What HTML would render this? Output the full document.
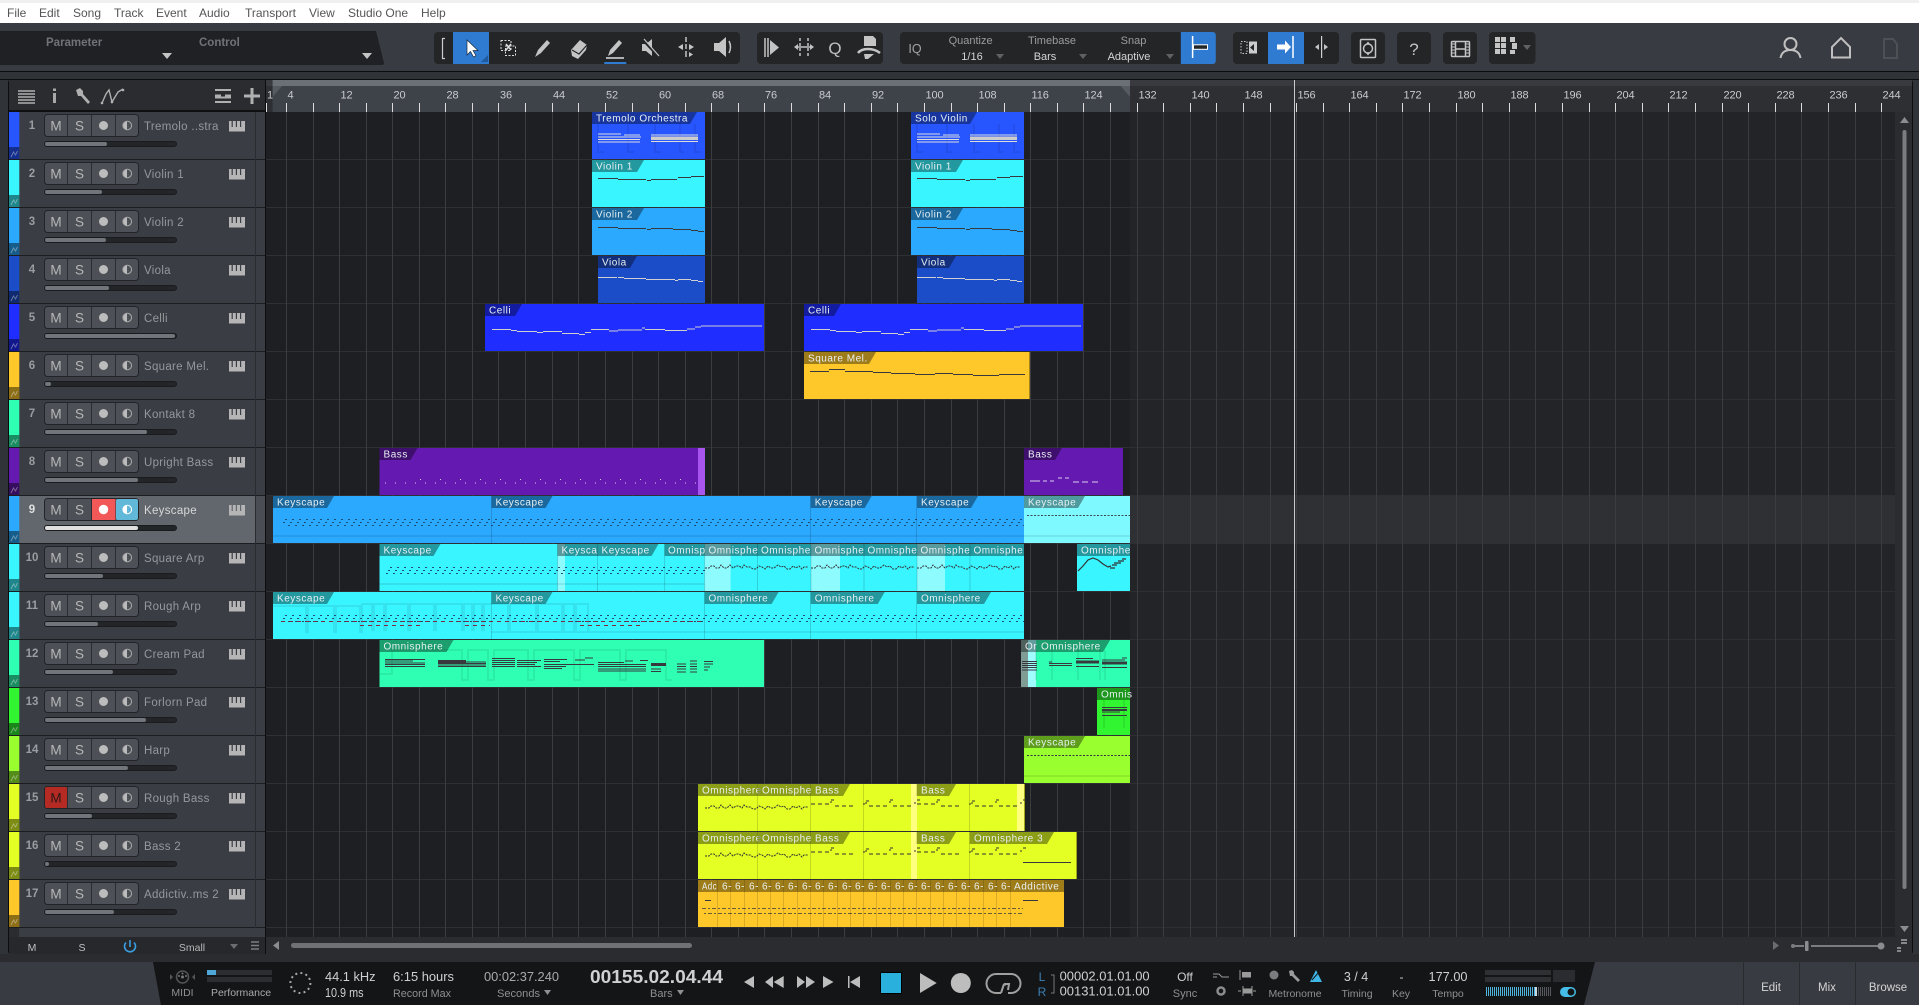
<!DOCTYPE html>
<html><head><meta charset="utf-8"><title>Studio One</title>
<style>
html,body{margin:0;padding:0;background:#303338;width:1919px;height:1005px;overflow:hidden}
svg{display:block;font-family:"Liberation Sans",sans-serif}
.m{font-size:12px;fill:#555}
.rl{font-size:11px;fill:#c9cbce;letter-spacing:-.1px}
.n{font-size:11.5px;font-weight:bold;fill:#9a9da1;text-anchor:middle}
.t{font-size:11.5px;fill:#95989c;letter-spacing:.3px}
.l{font-size:10px;fill:#e8f0f2;letter-spacing:.53px}
.f{fill:#000;fill-opacity:.38}
.g{font-size:11px;fill:#9a9c9f;text-anchor:middle}
.v{font-size:11px;fill:#d4d4d4;text-anchor:middle}
.w{font-size:12.5px;fill:#cfd0d2}
.s{font-size:11px;fill:#8d9094}
.d{fill:none;stroke:#38383f}
.i{fill:none;stroke:#c4c4c4;stroke-width:1.5}
.o{fill:#c4c4c4}
.a{fill:none;stroke:#000;stroke-opacity:.07;stroke-width:2}
</style></head><body>
<svg width="1919" height="1005" viewBox="0 0 1919 1005" xmlns="http://www.w3.org/2000/svg">
<defs>
<pattern id="a" width="7" height="48" patternUnits="userSpaceOnUse"><path d="M5 39h2v1H5zM3 42h2v1H3zM1 45h2v1H1z" fill="#1c4f78"/></pattern>
<pattern id="st" width="2" height="10" patternUnits="userSpaceOnUse"><rect width="1" height="10" fill="#4fb4dc"/></pattern>
<pattern id="sg" width="2" height="10" patternUnits="userSpaceOnUse"><rect width="1" height="10" fill="#55585c"/></pattern>
<g id="r"><rect x="19" width="236" height="47" fill="#3a3d43"/><rect x="256" width="9" height="47" fill="#3a3d43"/></g>
<g id="c">
<rect x="44.5" y="2.5" width="94" height="22" rx="3" fill="#4d5056" stroke="#222427"/>
<path d="M67.5 3v21M91.5 3v21M115.5 3v21" stroke="#2b2d31"/>
<text x="56" y="18.5" font-size="13.5" fill="#b8b8b8" text-anchor="middle">M</text>
<text x="79.5" y="18.5" font-size="13.5" fill="#b8b8b8" text-anchor="middle">S</text>
<circle cx="103.5" cy="13.5" r="4.5" fill="#bcbcbc"/>
<path d="M127 9a4.500 4.500 0 0 0 0 9z" fill="#bcbcbc"/><circle cx="127.3" cy="13.5" r="4.3" fill="none" stroke="#a9a9a9"/>
<rect x="44.5" y="29.5" width="132" height="5" rx="2.5" fill="#232528" stroke="#1a1b1d"/>
<path d="M229 9h2.600v6h1.200V9h3v6h1.200V9h3v6h1.200V9h3.800v10.500H229z" fill="#b5b5b5"/>
</g>
<g id="sw"><rect x="9" y="35" width="10.300" height="12" fill="#000" fill-opacity=".45"/><path d="M11 45l2.500-5 2 3 2-4" fill="none" stroke="#fff" stroke-opacity=".35"/></g>
<g id="w1"><path d="M0 4h4l2-2h3l2 2h3l2-3 3 3h3l3-3 3 3 3-2h3l3 2 2-3 3 2h3l3 2h3l3-3 3 1 3 2 3-3 3 2h3l4-3 3 2 3-1 3 3h3l3-3 3 2 3-2 3 3 2-2h4" fill="none" stroke="#333" stroke-dasharray="2 1"/></g>
<g id="bs"><path d="M0 4h4m3 0h4m3 0h4M20 0h3m-4 2h2M24 6h4m3 0h4m3 0h4M54 4h-2m3-3h3m-4 2h2M58 6h4m3 0h4m3 0h4M79 0h3m-4 2h2M82 6h4m3 0h4m3 0h4M103 3h2m1-3h3" fill="none" stroke="#333"/></g>
<g id="tr"><path d="M6 24h23M32 25h16M6 27h43M6 29.500h42M6 32h42M59 25h47M59 31.500h47" stroke="#ddd" fill="none"/><path d="M59 28.200h47" stroke="#ccc" stroke-width="3.500" fill="none"/></g>
</defs>

<!-- chrome -->
<rect width="1919" height="1005" fill="#303338"/>
<rect width="1919" height="23" fill="#fff"/><rect width="1919" height="3" fill="#f0f0f0"/>
<rect y="23" width="1919" height="48" fill="#383b41"/><rect y="71" width="1919" height="1" fill="#0c0d0e"/>
<g class="m"><text class="m" x="7" y="17">File</text><text class="m" x="39" y="17">Edit</text><text class="m" x="73" y="17">Song</text><text class="m" x="114" y="17">Track</text><text class="m" x="156" y="17">Event</text><text class="m" x="199" y="17">Audio</text><text class="m" x="245" y="17">Transport</text><text class="m" x="309" y="17">View</text><text class="m" x="348" y="17">Studio One</text><text class="m" x="421" y="17">Help</text></g>

<!-- parameter panel -->
<path d="M0 31H376L384 63Q384 65 382 65H0z" fill="#1f2125"/>
<text x="46" y="46" font-size="11.500" font-weight="bold" fill="#6f7276">Parameter</text>
<text x="199" y="46" font-size="11.500" font-weight="bold" fill="#6f7276">Control</text>
<path d="M162 53h10l-5 6zM362 53h10l-5 6z" fill="#c4c4c4"/>

<!-- tool groups -->
<g fill="#232527">
<rect x="434" y="32" width="306" height="32" rx="4"/><rect x="757" y="32" width="126" height="32" rx="4"/><rect x="900" y="32" width="315.500" height="32" rx="4"/><rect x="1233" y="32" width="106" height="32" rx="4"/><rect x="1351" y="32" width="34" height="32" rx="4"/><rect x="1397" y="32" width="34" height="32" rx="4"/><rect x="1443" y="32" width="34" height="32" rx="4"/><rect x="1489" y="32" width="46.500" height="32" rx="4"/>
</g>
<path d="M445 38.500h-2.500v20h2.500" fill="none" stroke="#ccc" stroke-width="1.200"/>
<rect x="453" y="32" width="36" height="32" fill="#2f7bd1"/>
<path d="M481 62l7-7v7z" fill="#1f5a9e"/>
<path d="M467 40v15l3.500-3.500 3 5.500 2.500-1.300-3-5.200h5z" fill="#fff" stroke="#1a2a3a" stroke-width=".7"/>
<path d="M501 40.500h10v10h-10zM505.500 46h10v9.500h-10z" fill="none" stroke="#ddd" stroke-dasharray="2 1.500"/><path d="M506 44l5 6m0-6l-5 6" stroke="#ddd" stroke-width="1.500"/>
<path d="M535 57l3-7 9-10 3 3-9 10z" class="o"/>
<path d="M571 50l9-10 7 5-1 5-8 9-6-3z" class="o"/><path d="M572 50l7 4 8-9" fill="none" stroke="#232527" stroke-width="1.200"/>
<path d="M608 56l2-6 9-10 3 3-9 10z" class="o"/><path d="M606 58h18" stroke="#ddd" stroke-width="1.500"/>
<rect x="604" y="62" width="22.500" height="2" rx="1" fill="#2f7bd1"/>
<path d="M642 44h4l6-5v17l-6-5h-4z" class="o"/><path d="M642 39l17 18" stroke="#232527" stroke-width="2.500"/><path d="M644 39l15 17" stroke="#c4c4c4" stroke-width="1.200"/>
<path d="M686 37v5m0 2v5m0 2v6" stroke="#c4c4c4" stroke-width="1.500"/><path d="M678 47l5-3v6zM694 47l-5-3v6zM689 52v5l4-2.500z" class="o"/>
<path d="M714 43h5l7-6v20l-7-6h-5z" class="o"/><path d="M729 41q3 6 0 12" class="i"/>
<!-- group 2 -->
<path d="M765 38v19M768 38v19" class="i"/><path d="M770 40l9 7.500-9 7.500z" class="o"/>
<path d="M800 38v19M808 38v19" class="i" stroke-dasharray="3 2"/><path d="M796 47h16" class="i"/><path d="M794 47l4-3v6zM814 47l-4-3v6z" class="o"/>
<text x="835" y="54" font-size="17" fill="#c0c0c0" text-anchor="middle">Q</text>
<path d="M864 36h9l3 3v7h-12z" class="o"/><path d="M858 53q3-4 10-4t12 4" fill="none" stroke="#c4c4c4" stroke-width="2.500"/><path d="M864 54h10l-6 5h-3z" class="o"/>
<!-- quantize -->
<text x="915" y="53" font-size="12.500" fill="#a4a4a4" text-anchor="middle">IQ</text>
<text class="g" x="970.600" y="44">Quantize</text><text class="v" x="972" y="60">1/16</text><path d="M996 54h8l-4 5z" fill="#5f6165"/>
<text class="g" x="1052" y="44">Timebase</text><text class="v" x="1045" y="60">Bars</text><path d="M1079 54h8l-4 5z" fill="#5f6165"/>
<text class="g" x="1133.500" y="44">Snap</text><text class="v" x="1129" y="60">Adaptive</text><path d="M1166 54h8l-4 5z" fill="#5f6165"/>
<path d="M1180.800 32h32a3 3 0 0 1 3 3v26a3 3 0 0 1-3 3h-32z" fill="#2f7bd1"/>
<path d="M1192.600 36v22" stroke="#fff" stroke-width="1.500"/><rect x="1193.500" y="44.800" width="14" height="4.500" fill="#232527" stroke="#fff"/>
<!-- group 4 -->
<rect x="1241" y="41.500" width="6" height="12" fill="none" stroke="#ccc" stroke-dasharray="1.500 1.500"/><rect x="1249" y="41.500" width="8" height="12" fill="#ccc"/><path d="M1254 44l-4 3.500 4 3.500z" fill="#232527"/>
<rect x="1268" y="32" width="36" height="32" fill="#2f7bd1"/><path d="M1293 36v22" stroke="#fff" stroke-width="1.500"/><path d="M1277 44.500h8v-4l6 6.500-6 6.500v-4h-8z" fill="#fff"/>
<path d="M1321.600 36v22" stroke="#d0d0d0" stroke-width="1.200"/><path d="M1319 44v6l-4-3zM1324 44v6l4-3z" class="o"/>
<rect x="1360.500" y="39.500" width="15" height="18" rx="1" class="i"/><circle cx="1368" cy="48.500" r="4.500" class="i"/><path d="M1368 41.500l2 2.500h-4zM1368 55.500l2-2.500h-4z" class="o"/>
<text x="1414" y="55" font-size="17" fill="#c4c4c4" text-anchor="middle">?</text>
<rect x="1451.500" y="41.500" width="18" height="15" rx="1" class="i"/><path d="M1455.500 41v15M1465.500 41v15M1455 49h11" class="i"/><path d="M1452 44h3M1452 47h3M1452 50h3M1452 53h3M1466 44h3M1466 47h3M1466 50h3M1466 53h3" stroke="#c4c4c4"/>
<path d="M1495 37h5v5h-5zM1501 37h5v5h-5zM1495 43h5v5h-5zM1501 43h5v5h-5zM1495 49h5v5h-5zM1501 49h5v5h-5zM1510 37h5v5h-5zM1512 43h5v6h-5zM1510 50h5v4h-5z" class="o"/>
<path d="M1523 45h8l-4 5z" fill="#5f6165"/>
<!-- right icons -->
<circle cx="1790.500" cy="44" r="6" fill="none" stroke="#c0c0c0" stroke-width="2"/><path d="M1780.500 58q1.500-8 10-8t10 8" fill="none" stroke="#c0c0c0" stroke-width="2"/>
<path d="M1832 57.500V47l9-9 9 9v10.500z" fill="none" stroke="#c0c0c0" stroke-width="2"/>
<path d="M1884 39h9l4 5v14h-13z" fill="none" stroke="#4d5055" stroke-width="2"/>

<!-- main panel frame -->
<rect y="79" width="1919" height="1" fill="#0c0d0e"/>
<rect x="8" y="79" width="1905" height="876" rx="4" fill="#0c0d0e"/>
<rect x="9" y="80" width="1903" height="874" rx="3" fill="#2a2c30"/>

<!-- arrangement -->
<rect x="266" y="112" width="864" height="825" fill="#1e1f22"/>
<rect x="1130" y="112" width="765" height="825" fill="#232427"/>
<rect x="266" y="496" width="864" height="48" fill="#2a2b2e"/>
<rect x="1130" y="496" width="765" height="48" fill="#2f3033"/>
<path d="M266 159.500H1895M266 207.500H1895M266 255.500H1895M266 303.500H1895M266 351.500H1895M266 399.500H1895M266 447.500H1895M266 495.500H1895M266 543.500H1895M266 591.500H1895M266 639.500H1895M266 687.500H1895M266 735.500H1895M266 783.500H1895M266 831.500H1895M266 879.500H1895M266 927.500H1895" stroke="#2e2f32"/>
<path d="M286.500 112V937M313.500 112V937M339.500 112V937M366.500 112V937M392.500 112V937M419.500 112V937M445.500 112V937M472.500 112V937M498.500 112V937M525.500 112V937M552.500 112V937M578.500 112V937M605.500 112V937M632.500 112V937M658.500 112V937M685.500 112V937M711.500 112V937M738.500 112V937M764.500 112V937M791.500 112V937M818.500 112V937M844.500 112V937M871.500 112V937M897.500 112V937M924.500 112V937M951.500 112V937M977.500 112V937M1004.500 112V937M1030.500 112V937M1057.500 112V937M1083.500 112V937M1110.500 112V937M1137.500 112V937M1163.500 112V937M1190.500 112V937M1216.500 112V937M1243.500 112V937M1270.500 112V937M1296.500 112V937M1323.500 112V937M1349.500 112V937M1376.500 112V937M1402.500 112V937M1429.500 112V937M1456.500 112V937M1482.500 112V937M1509.500 112V937M1535.500 112V937M1562.500 112V937M1589.500 112V937M1615.500 112V937M1642.500 112V937M1668.500 112V937M1695.500 112V937M1722.500 112V937M1748.500 112V937M1775.500 112V937M1801.500 112V937M1828.500 112V937M1855.500 112V937M1881.500 112V937" stroke="#3b3c3f"/>

<!-- ruler -->
<rect x="266" y="80" width="1646" height="32" fill="#2d2f33"/>
<rect x="266" y="80" width="1646" height="6" fill="#383a3f"/>
<rect x="272.600" y="86" width="857.400" height="26" fill="#3e4249"/>
<rect x="272.600" y="80" width="857.400" height="6" fill="#6b6f76"/>
<path d="M272.600 86h9.400l-9.400 11zM1130 86h-9.400l9.400 11z" fill="#565a61"/>
<path d="M266.500 103V112M286.500 103V112M313.500 103V112M339.500 103V112M366.500 103V112M392.500 103V112M419.500 103V112M445.500 103V112M472.500 103V112M498.500 103V112M525.500 103V112M552.500 103V112M578.500 103V112M605.500 103V112M632.500 103V112M658.500 103V112M685.500 103V112M711.500 103V112M738.500 103V112M764.500 103V112M791.500 103V112M818.500 103V112M844.500 103V112M871.500 103V112M897.500 103V112M924.500 103V112M951.500 103V112M977.500 103V112M1004.500 103V112M1030.500 103V112M1057.500 103V112M1083.500 103V112M1110.500 103V112M1137.500 103V112M1163.500 103V112M1190.500 103V112M1216.500 103V112M1243.500 103V112M1270.500 103V112M1296.500 103V112M1323.500 103V112M1349.500 103V112M1376.500 103V112M1402.500 103V112M1429.500 103V112M1456.500 103V112M1482.500 103V112M1509.500 103V112M1535.500 103V112M1562.500 103V112M1589.500 103V112M1615.500 103V112M1642.500 103V112M1668.500 103V112M1695.500 103V112M1722.500 103V112M1748.500 103V112M1775.500 103V112M1801.500 103V112M1828.500 103V112M1855.500 103V112M1881.500 103V112" stroke="#dcdcdc"/>
<g><text class="rl" x="267" y="98.500">1</text><text class="rl" x="287.500" y="98.500">4</text><text class="rl" x="340.500" y="98.500">12</text><text class="rl" x="393.500" y="98.500">20</text><text class="rl" x="446.500" y="98.500">28</text><text class="rl" x="500" y="98.500">36</text><text class="rl" x="553" y="98.500">44</text><text class="rl" x="606" y="98.500">52</text><text class="rl" x="659" y="98.500">60</text><text class="rl" x="712" y="98.500">68</text><text class="rl" x="765" y="98.500">76</text><text class="rl" x="819" y="98.500">84</text><text class="rl" x="872" y="98.500">92</text><text class="rl" x="925.500" y="98.500">100</text><text class="rl" x="978.500" y="98.500">108</text><text class="rl" x="1031.500" y="98.500">116</text><text class="rl" x="1084.500" y="98.500">124</text><text class="rl" x="1138.500" y="98.500">132</text><text class="rl" x="1191.500" y="98.500">140</text><text class="rl" x="1244.500" y="98.500">148</text><text class="rl" x="1297.500" y="98.500">156</text><text class="rl" x="1350.500" y="98.500">164</text><text class="rl" x="1403.500" y="98.500">172</text><text class="rl" x="1457.500" y="98.500">180</text><text class="rl" x="1510.500" y="98.500">188</text><text class="rl" x="1563.500" y="98.500">196</text><text class="rl" x="1616.500" y="98.500">204</text><text class="rl" x="1669.500" y="98.500">212</text><text class="rl" x="1723.500" y="98.500">220</text><text class="rl" x="1776.500" y="98.500">228</text><text class="rl" x="1829.500" y="98.500">236</text><text class="rl" x="1882.500" y="98.500">244</text></g>

<!-- CLIPS -->
<!-- row1 -->
<rect x="592" y="112" width="113" height="47" fill="#2756ff"/><rect x="911" y="112" width="113" height="47" fill="#2756ff"/>
<path class="a" d="M598 124v28h6M628 124v28h6M655 124v28h6M680 124v28h4M695 124v28h6M917 124v28h6M947 124v28h6M974 124v28h6M999 124v28h4M1014 124v28h6"/>
<use href="#tr" x="592" y="110"/><use href="#tr" x="911" y="110"/>
<path class="f" d="M592 112h105l-7 12h-98z"/><text class="l" x="596" y="121.500">Tremolo Orchestra</text>
<path class="f" d="M911 112h66l-7 12h-59z"/><text class="l" x="915" y="121.500">Solo Violin</text>
<!-- row2 -->
<rect x="592" y="160" width="113" height="47" fill="#39f5ff"/><rect x="911" y="160" width="113" height="47" fill="#39f5ff"/>
<path class="d" stroke-width="1" id="v1" d="M598 178.500h20m0 1h28m1 1h4m0-1h26m1-2h13m0-1h13"/><path class="d" d="M917 178.500h20m0 1h28m1 1h4m0-1h26m1-2h13m0-1h13"/>
<path class="f" d="M592 160h52l-7 12h-45z"/><text class="l" x="596" y="169.500">Violin 1</text>
<path class="f" d="M911 160h52l-7 12h-45z"/><text class="l" x="915" y="169.500">Violin 1</text>
<!-- row3 -->
<rect x="592" y="208" width="113" height="47" fill="#2aa9ff"/><rect x="911" y="208" width="113" height="47" fill="#2aa9ff"/>
<path class="d" d="M598 227.500h20m0 1h28m1 1h4m0-1h22m0 1h18m0 1h7m0 1h6"/><path class="d" d="M917 227.500h20m0 1h28m1 1h4m0-1h22m0 1h18m0 1h7m0 1h6"/>
<path class="f" d="M592 208h52l-7 12h-45z"/><text class="l" x="596" y="217.500">Violin 2</text>
<path class="f" d="M911 208h52l-7 12h-45z"/><text class="l" x="915" y="217.500">Violin 2</text>
<!-- row4 -->
<rect x="598" y="256" width="107" height="47" fill="#1c4dc9"/><rect x="917" y="256" width="107" height="47" fill="#1c4dc9"/>
<path d="M598 277.500h19m1 0h6m0 1h22m0 1h29m0 1h3m0-1h13m0 1h7m0 1h5" fill="none" stroke="#d0d0d0"/><path d="M917 277.500h19m1 0h6m0 1h22m0 1h29m0 1h3m0-1h13m0 1h7m0 1h5" fill="none" stroke="#d0d0d0"/>
<path class="f" d="M598 256h39l-7 12h-32z"/><text class="l" x="602" y="265.500">Viola</text>
<path class="f" d="M917 256h39l-7 12h-32z"/><text class="l" x="921" y="265.500">Viola</text>
<!-- row5 -->
<rect x="485" y="304" width="279" height="47" fill="#1f2dff"/><rect x="804" y="304" width="279" height="47" fill="#1f2dff"/>
<path d="M492 329.500h19m0 1h6m0 1h20m0 1h6m0-1h19m0 2h17m0 1h6m0-2h6m0-3h18m0 1.500h9m0-1h24m0-2h3m0 1.500h20m0 1h22m0-1.500h8m0-2h6m0-1h61" fill="none" stroke="#d0d0d0"/>
<path d="M811 329.500h19m0 1h6m0 1h20m0 1h6m0-1h19m0 2h17m0 1h6m0-2h6m0-3h18m0 1.500h9m0-1h24m0-2h3m0 1.500h20m0 1h22m0-1.500h8m0-2h6m0-1h61" fill="none" stroke="#d0d0d0"/>
<path class="f" d="M485 304h37l-7 12h-30z"/><text class="l" x="489" y="313.500">Celli</text>
<path class="f" d="M804 304h37l-7 12h-30z"/><text class="l" x="808" y="313.500">Celli</text>
<!-- row6 -->
<rect x="804" y="352" width="226" height="47" fill="#ffc82a"/>
<path class="d" d="M810 371.500h19m0-2h16m0 2h28m0 1h18m0 1h24m0 1h20m0-1h18m0 1h20m0 1h26m0-1h26"/>
<rect x="1029" y="352" width="1" height="47" fill="#a88417"/>
<path class="f" d="M804 352h72l-7 12h-65z"/><text class="l" x="808" y="361.500">Square Mel.</text>
<!-- row8 -->
<rect x="379.500" y="448" width="325.500" height="47" fill="#6419b0"/><rect x="698" y="448" width="7" height="47" fill="#a855ee"/>
<rect x="1024" y="448" width="99" height="47" fill="#6419b0"/>
<path d="M385 483H698" fill="none" stroke="#d8c8ee" stroke-dasharray="1 9"/><path d="M420 479.500H698" fill="none" stroke="#d8c8ee" stroke-dasharray="1 19"/>
<path d="M1030 481h10m3 0h4m3 0h4m4-3h4m3 0h4m4 4h6m3 0h6m4 0h6" fill="none" stroke="#d8d0ee"/>
<path class="f" d="M379.500 448h38l-7 12h-31z"/><text class="l" x="383.500" y="457.500">Bass</text>
<path class="f" d="M1024 448h38l-7 12h-31z"/><text class="l" x="1028" y="457.500">Bass</text>
<!-- row9 -->
<rect x="273" y="496" width="751" height="47" fill="#2aa9ff"/><rect x="1024" y="496" width="106" height="47" fill="#7ef9ff"/>
<rect x="273" y="535" width="857" height="2" fill="#000" fill-opacity=".08"/>
<rect x="283" y="519" width="741" height="11" fill="url(#a)"/>
<path d="M1027 515.500H1130" stroke="#3a4a50" stroke-dasharray="2 1.500"/>
<path d="M491.500 496v47M810.500 496v47M916.500 496v47" stroke="#000" stroke-opacity=".15"/>
<path class="f" d="M273 496h61l-7 12h-54z"/><text class="l" x="277" y="505.500">Keyscape</text>
<path class="f" d="M491.500 496h61l-7 12h-54z"/><text class="l" x="495.500" y="505.500">Keyscape</text>
<path class="f" d="M810.700 496h61l-7 12h-54z"/><text class="l" x="814.700" y="505.500">Keyscape</text>
<path class="f" d="M917 496h61l-7 12h-54z"/><text class="l" x="921" y="505.500">Keyscape</text>
<path class="f" d="M1024 496h61l-7 12h-54z"/><text class="l" x="1028" y="505.500">Keyscape</text>
<!-- row10 -->
<rect x="379.500" y="544" width="644.500" height="47" fill="#39f5ff"/><rect x="1077" y="544" width="53" height="47" fill="#39f5ff"/>
<path d="M557.500 544h7.500v47h-7.500zM704.600 544h26v47h-26zM811 544h29v47h-29zM917 544h28v47h-28z" fill="#8efbff"/>
<rect x="379.500" y="583" width="325" height="2" fill="#000" fill-opacity=".08"/>
<rect x="386" y="567" width="319" height="11" fill="url(#a)"/>
<use href="#w1" x="705" y="564"/><use href="#w1" x="811" y="564"/><use href="#w1" x="917" y="564"/>
<path d="M557.500 544v47M597.500 544v47M664.600 544v47M704.600 544v47M757.500 544v47M811 544v47M864 544v47M917 544v47M970 544v47" stroke="#000" stroke-opacity=".15"/>
<path d="M1078 571l5-5 5-6 5-2 5 2 5 4 5 3 3-1m1-1h5m-7 3h5m-1-5h7m-3-2h6m-2-2h4" fill="none" stroke="#333" stroke-width="1.200"/>
<path class="f" d="M379.500 544h61l-7 12h-54z"/><text class="l" x="383.500" y="553.500">Keyscape</text>
<path class="f" d="M557.500 544h40v12h-40z"/><text class="l" x="561.500" y="553.500">Keysca</text>
<path class="f" d="M597.500 544h61l-7 12h-54z"/><text class="l" x="601.500" y="553.500">Keyscape</text>
<path class="f" d="M664.600 544h40v12h-40z"/><text class="l" x="668" y="553.500">Omnisp</text>
<path class="f" d="M704.600 544h53v12h-53z"/><text class="l" x="708.500" y="553.500">Omnisphe</text>
<path class="f" d="M757.500 544h53.500v12h-53.500z"/><text class="l" x="761" y="553.500">Omnisphe</text>
<path class="f" d="M811 544h53v12h-53z"/><text class="l" x="814.500" y="553.500">Omnisphe</text>
<path class="f" d="M864 544h53v12h-53z"/><text class="l" x="867.500" y="553.500">Omnisphe</text>
<path class="f" d="M917 544h53v12h-53z"/><text class="l" x="920.500" y="553.500">Omnisphe</text>
<path class="f" d="M970 544h54v12h-54z"/><text class="l" x="973.500" y="553.500">Omnisphe</text>
<path class="f" d="M1077 544h53v12h-53z"/><text class="l" x="1081" y="553.500">Omnisphe</text>
<!-- row11 -->
<rect x="273" y="592" width="751" height="47" fill="#39f5ff"/>
<rect x="491" y="631" width="533" height="2" fill="#000" fill-opacity=".07"/>
<path class="a" d="M273 606h33v26h2V606h26v26h2V606h24v26h2V604h10v26h2V604h10v26h2V604h22v26h2V604h24v26h2V604h26v26h2V604h8v26h2V604h8v26h2V604h24v26h2V604h26v26h2V604h24v26h2V604h10v26h2V604h12v26h2"/>
<rect x="281" y="615" width="743" height="11" fill="url(#a)"/>
<path d="M281 621.500H704M360 625.500H420M465 625.500H490M580 625.500H640" stroke="#7a2a44" stroke-dasharray="4 4"/>
<path d="M491.500 592v47M704.500 592v47M810.500 592v47M916.500 592v47" stroke="#000" stroke-opacity=".15"/>
<path class="f" d="M273 592h61l-7 12h-54z"/><text class="l" x="277" y="601.500">Keyscape</text>
<path class="f" d="M491.500 592h61l-7 12h-54z"/><text class="l" x="495.500" y="601.500">Keyscape</text>
<path class="f" d="M704.600 592h74l-7 12h-67z"/><text class="l" x="708.500" y="601.500">Omnisphere</text>
<path class="f" d="M810.700 592h74l-7 12h-67z"/><text class="l" x="814.700" y="601.500">Omnisphere</text>
<path class="f" d="M917 592h74l-7 12h-67z"/><text class="l" x="921" y="601.500">Omnisphere</text>
<!-- row12 -->
<rect x="379.500" y="640" width="384.500" height="47" fill="#2effb3"/><rect x="1021" y="640" width="109" height="47" fill="#2effb3"/>
<rect x="1021" y="640" width="7" height="47" fill="#7f9c95"/><rect x="1028" y="640" width="8" height="47" fill="#a0fdff"/>
<path class="a" d="M380 674h12v-24h70v30h6v-30h20v30h6v-30h34v30h6v-30h40v30h6v-30h40v30h6v-30h40v30h6M1036 650v30M1052 650v30M1078 650v30M1100 650v30M1105 650v30"/>
<path d="M385 659.500h40M385 661h28M385 663h40M385 664.500h40M385 666.500h40M438 660.500h28M438 662h48M438 663.500h48M438 665h48M438 666.500h48M492 658.500h23M492 660.500h23M492 662.500h23M492 664.500h23M492 666.500h23M517 660.500h24M517 662.500h20M517 664.500h18M517 666.500h24M544 659.500h23M544 661.500h16M544 664.500h50M544 666.500h22M544 668.500h18M575 660h10M585 658h8M598 662.500h26M598 664.500h48M598 666.500h48M598 669h48M598 671h48M625 661h8M640 660.500h8M651 663.500h15M651 665.500h15M651 669h10M651 671.500h10M677 664h9M677 666.500h9M677 669h9M677 672h9M690 661h7M690 664h7M690 666.500h7M690 669h7M690 672h7M704 661.500h9M704 664h9M704 667h6M704 670h4M1022 661.500h15M1022 663.500h15M1022 665.500h15M1022 667.500h15M1022 670h15M1049 662h3M1049 663.500h23M1049 665.500h23M1076 658.500h17M1076 666.500h23M1102 660h23M1102 667.500h25M1122 658h5" fill="none" stroke="#38383f"/>
<path d="M1076 662h23M1102 663h25M651 664.500h15M438 661.500h28" stroke="#38383f" stroke-width="3"/>
<path class="f" d="M379.500 640h74l-7 12h-67z"/><text class="l" x="383.500" y="649.500">Omnisphere</text>
<path class="f" d="M1021 640h89l-7 12h-82z"/><text class="l" x="1025" y="649.500">Or</text><text class="l" x="1041" y="649.500">Omnisphere</text>
<!-- row13 -->
<rect x="1097" y="688" width="33" height="47" fill="#30f530"/>
<path class="a" d="M1104 700v28M1124 700v28"/>
<path d="M1102 707.500h25M1102 712h18M1102 715.500h25" stroke="#38383f"/><path d="M1102 710h25" stroke="#38383f" stroke-width="2"/>
<path class="f" d="M1097 688h33v12h-33z"/><text class="l" x="1101" y="697.500">Omnis</text>
<!-- row14 -->
<rect x="1024" y="736" width="106" height="47" fill="#99ff2e"/><rect x="1024" y="775" width="106" height="2" fill="#000" fill-opacity=".08"/>
<path d="M1027 755.500H1130" stroke="#334" stroke-dasharray="2 1.500"/>
<path class="f" d="M1024 736h61l-7 12h-54z"/><text class="l" x="1028" y="745.500">Keyscape</text>
<!-- row15 -->
<rect x="698" y="784" width="326.700" height="47" fill="#e3ff23"/>
<path d="M911 784h6v47h-6zM1017 784h7v47h-7z" fill="#ffff80"/><rect x="1024" y="784" width="1" height="47" fill="#a0a81a"/>
<path d="M757.500 784v47M810.500 784v47M863.500 784v47M969.500 784v47" stroke="#000" stroke-opacity=".15"/>
<use href="#w1" x="705" y="804"/><use href="#bs" x="811" y="800"/><use href="#bs" x="917" y="800"/>
<path class="f" d="M698 784h59.700v12H698z"/><text class="l" x="702" y="793.500">Omnisphere</text>
<path class="f" d="M757.700 784h53v12h-53z"/><text class="l" x="762" y="793.500">Omnisphe</text>
<path class="f" d="M810.700 784h39.300l-7 12h-32.300z"/><text class="l" x="815" y="793.500">Bass</text>
<path class="f" d="M916.700 784h39.300l-7 12h-32.300z"/><text class="l" x="921" y="793.500">Bass</text>
<!-- row16 -->
<rect x="698" y="832" width="379" height="47" fill="#e3ff23"/>
<path d="M911 832h6v47h-6z" fill="#ffff80"/><rect x="1076" y="832" width="1" height="47" fill="#a0a81a"/>
<path d="M757.500 832v47M810.500 832v47M863.500 832v47M969.500 832v47" stroke="#000" stroke-opacity=".15"/>
<use href="#w1" x="705" y="852"/><use href="#bs" x="811" y="848"/><use href="#bs" x="917" y="848"/>
<path d="M1023 862.500h48" stroke="#38383f"/>
<path class="f" d="M698 832h59.700v12H698z"/><text class="l" x="702" y="841.500">Omnisphere</text>
<path class="f" d="M757.700 832h53v12h-53z"/><text class="l" x="762" y="841.500">Omnisphe</text>
<path class="f" d="M810.700 832h39.300l-7 12h-32.300z"/><text class="l" x="815" y="841.500">Bass</text>
<path class="f" d="M916.700 832h39.300l-7 12h-32.300z"/><text class="l" x="921" y="841.500">Bass</text>
<path class="f" d="M969.700 832h84.300l-7 12h-77.300z"/><text class="l" x="974" y="841.500">Omnisphere 3</text>
<!-- row17 -->
<rect x="698" y="880" width="366" height="47" fill="#ffc82a"/>
<path class="f" d="M698 880h366v12H698z"/>
<path d="M717.500 880v47M730.500 880v47M744.500 880v47M757.500 880v47M770.500 880v47M783.500 880v47M797.500 880v47M810.500 880v47M823.500 880v47M837.500 880v47M850.500 880v47M863.500 880v47M876.500 880v47M890.500 880v47M903.500 880v47M916.500 880v47M930.500 880v47M943.500 880v47M956.500 880v47M969.500 880v47M983.500 880v47M996.500 880v47M1010.500 880v47" stroke="#000" stroke-opacity=".14"/>
<path d="M705 900.500h6M1023 900.500h15" stroke="#38383f"/>
<path d="M702 908.500H1023" stroke="#38383f" stroke-opacity=".75" stroke-dasharray="4 2 2 2"/><path d="M704 913.500H1023" stroke="#38383f" stroke-opacity=".75" stroke-dasharray="2 2 4 2"/>
<g class="l"><text class="l" x="702" y="889.500" textLength="15" lengthAdjust="spacingAndGlyphs">Adc</text><text class="l" x="722" y="889.500">6-</text><text class="l" x="735" y="889.500">6-</text><text class="l" x="749" y="889.500">6-</text><text class="l" x="762" y="889.500">6-</text><text class="l" x="775" y="889.500">6-</text><text class="l" x="788" y="889.500">6-</text><text class="l" x="802" y="889.500">6-</text><text class="l" x="815" y="889.500">6-</text><text class="l" x="828" y="889.500">6-</text><text class="l" x="842" y="889.500">6-</text><text class="l" x="855" y="889.500">6-</text><text class="l" x="868" y="889.500">6-</text><text class="l" x="881" y="889.500">6-</text><text class="l" x="895" y="889.500">6-</text><text class="l" x="908" y="889.500">6-</text><text class="l" x="921" y="889.500">6-</text><text class="l" x="935" y="889.500">6-</text><text class="l" x="948" y="889.500">6-</text><text class="l" x="961" y="889.500">6-</text><text class="l" x="974" y="889.500">6-</text><text class="l" x="988" y="889.500">6-</text><text class="l" x="1001" y="889.500">6-</text><text class="l" x="1014" y="889.500">Addictive</text></g>

<!-- playhead -->
<rect x="1294" y="80" width="1" height="857" fill="#c8c8c8"/>

<!-- arrangement right scroll -->
<rect x="1895" y="112" width="17" height="825" fill="#2a2c30"/>
<path d="M1900 123l4.500-6 4.500 6z" fill="#8a8c90"/><rect x="1902.500" y="130" width="4" height="759" rx="2" fill="#7a7c80"/><path d="M1900 926l4.500 6 4.500-6z" fill="#8a8c90"/>

<!-- track header -->
<rect x="9" y="80" width="257" height="30" fill="#2a2c30"/><rect x="9" y="110" width="257" height="2" fill="#0f1011"/>
<rect x="265" y="80" width="1" height="857" fill="#0c0d0e"/>
<path d="M18 91h17M18 94h17M18 97h17M18 100h17M18 103h17" stroke="#b0b0b0" stroke-width="1.500"/>
<path d="M53 93h3v10h-3zM53 88.500h3v2.500h-3z" fill="#a8a8a8"/>
<path d="M76 90l4-2 3 3 0 3 7 8-2 2-7-8h-3z" fill="#b0b0b0"/>
<path d="M102 103l4-9 3-4 3 12 6-10 5-3" fill="none" stroke="#b0b0b0" stroke-width="1.400"/><circle cx="102" cy="103" r="1.300" fill="#b0b0b0"/><circle cx="112" cy="102" r="1.300" fill="#b0b0b0"/><circle cx="123" cy="90" r="1.300" fill="#b0b0b0"/>
<path d="M215 90h16M215 102h16M215 95.500h6M225 95.500h6M215 97.500h16" stroke="#b0b0b0" stroke-width="2"/>
<path d="M244 94.500h16v3h-16zM250.500 88h3v16h-3z" fill="#b0b0b0"/>

<!-- tracks -->
<use href="#r" y="112"/><rect x="9" y="112" width="10.300" height="47" fill="#2756ff"/><use href="#sw" y="112"/><use href="#c" y="112"/><rect x="45" y="142" width="62" height="4" rx="2" fill="#72767c"/><text class="n" x="32" y="129">1</text><text class="t" x="144" y="130">Tremolo ..stra</text>
<use href="#r" y="160"/><rect x="9" y="160" width="10.300" height="47" fill="#39f5ff"/><use href="#sw" y="160"/><use href="#c" y="160"/><rect x="45" y="190" width="57" height="4" rx="2" fill="#72767c"/><text class="n" x="32" y="177">2</text><text class="t" x="144" y="178">Violin 1</text>
<use href="#r" y="208"/><rect x="9" y="208" width="10.300" height="47" fill="#2aa9ff"/><use href="#sw" y="208"/><use href="#c" y="208"/><rect x="45" y="238" width="61" height="4" rx="2" fill="#72767c"/><text class="n" x="32" y="225">3</text><text class="t" x="144" y="226">Violin 2</text>
<use href="#r" y="256"/><rect x="9" y="256" width="10.300" height="47" fill="#1c4dc9"/><use href="#sw" y="256"/><use href="#c" y="256"/><rect x="45" y="286" width="64" height="4" rx="2" fill="#72767c"/><text class="n" x="32" y="273">4</text><text class="t" x="144" y="274">Viola</text>
<use href="#r" y="304"/><rect x="9" y="304" width="10.300" height="47" fill="#1f2dff"/><use href="#sw" y="304"/><use href="#c" y="304"/><rect x="45" y="334" width="130" height="4" rx="2" fill="#72767c"/><text class="n" x="32" y="321">5</text><text class="t" x="144" y="322">Celli</text>
<use href="#r" y="352"/><rect x="9" y="352" width="10.300" height="47" fill="#ffc82a"/><use href="#sw" y="352"/><use href="#c" y="352"/><rect x="45" y="382" width="6" height="4" rx="2" fill="#72767c"/><text class="n" x="32" y="369">6</text><text class="t" x="144" y="370">Square Mel.</text>
<use href="#r" y="400"/><rect x="9" y="400" width="10.300" height="47" fill="#2effb3"/><use href="#sw" y="400"/><use href="#c" y="400"/><rect x="45" y="430" width="102" height="4" rx="2" fill="#72767c"/><text class="n" x="32" y="417">7</text><text class="t" x="144" y="418">Kontakt 8</text>
<use href="#r" y="448"/><rect x="9" y="448" width="10.300" height="47" fill="#6419b0"/><use href="#sw" y="448"/><use href="#c" y="448"/><rect x="45" y="478" width="93" height="4" rx="2" fill="#72767c"/><text class="n" x="32" y="465">8</text><text class="t" x="144" y="466">Upright Bass</text>
<rect x="19" y="496" width="236" height="47" fill="#62666d"/><rect x="256" y="496" width="9" height="47" fill="#4a4d54"/><rect x="9" y="496" width="10.300" height="47" fill="#2aa9ff"/><use href="#sw" y="496"/><use href="#c" y="496"/>
<rect x="92" y="499" width="23.500" height="21" fill="#f25858"/><circle cx="103.500" cy="509.500" r="4.700" fill="#fff"/>
<rect x="116" y="499" width="22" height="21" rx="2" fill="#62b8d8"/><path d="M127 505a4.500 4.500 0 0 0 0 9z" fill="#fff"/><circle cx="127.300" cy="509.500" r="4.300" fill="none" stroke="#fff"/>
<rect x="45" y="526" width="93" height="4" rx="2" fill="#e0e0e0"/><text class="n" x="32" y="513" style="fill:#e0e0e0">9</text><text class="t" x="144" y="514" style="fill:#d8d8d8">Keyscape</text>
<use href="#r" y="544"/><rect x="9" y="544" width="10.300" height="47" fill="#39f5ff"/><use href="#sw" y="544"/><use href="#c" y="544"/><rect x="45" y="574" width="58" height="4" rx="2" fill="#72767c"/><text class="n" x="32" y="561">10</text><text class="t" x="144" y="562">Square Arp</text>
<use href="#r" y="592"/><rect x="9" y="592" width="10.300" height="47" fill="#39f5ff"/><use href="#sw" y="592"/><use href="#c" y="592"/><rect x="45" y="622" width="53" height="4" rx="2" fill="#72767c"/><text class="n" x="32" y="609">11</text><text class="t" x="144" y="610">Rough Arp</text>
<use href="#r" y="640"/><rect x="9" y="640" width="10.300" height="47" fill="#2effb3"/><use href="#sw" y="640"/><use href="#c" y="640"/><rect x="45" y="670" width="68" height="4" rx="2" fill="#72767c"/><text class="n" x="32" y="657">12</text><text class="t" x="144" y="658">Cream Pad</text>
<use href="#r" y="688"/><rect x="9" y="688" width="10.300" height="47" fill="#30f530"/><use href="#sw" y="688"/><use href="#c" y="688"/><rect x="45" y="718" width="101" height="4" rx="2" fill="#72767c"/><text class="n" x="32" y="705">13</text><text class="t" x="144" y="706">Forlorn Pad</text>
<use href="#r" y="736"/><rect x="9" y="736" width="10.300" height="47" fill="#99ff2e"/><use href="#sw" y="736"/><use href="#c" y="736"/><rect x="45" y="766" width="83" height="4" rx="2" fill="#72767c"/><text class="n" x="32" y="753">14</text><text class="t" x="144" y="754">Harp</text>
<use href="#r" y="784"/><rect x="9" y="784" width="10.300" height="47" fill="#e3ff23"/><use href="#sw" y="784"/><use href="#c" y="784"/><rect x="45" y="787" width="22" height="21" rx="2" fill="#b52a22"/><text x="56" y="802.500" font-size="13.500" fill="#2a1a1a" text-anchor="middle">M</text><rect x="45" y="814" width="47" height="4" rx="2" fill="#72767c"/><text class="n" x="32" y="801">15</text><text class="t" x="144" y="802">Rough Bass</text>
<use href="#r" y="832"/><rect x="9" y="832" width="10.300" height="47" fill="#e3ff23"/><use href="#sw" y="832"/><use href="#c" y="832"/><rect x="45" y="862" width="4" height="4" rx="2" fill="#72767c"/><text class="n" x="32" y="849">16</text><text class="t" x="144" y="850">Bass 2</text>
<use href="#r" y="880"/><rect x="9" y="880" width="10.300" height="47" fill="#ffc82a"/><use href="#sw" y="880"/><use href="#c" y="880"/><rect x="45" y="910" width="69" height="4" rx="2" fill="#72767c"/><text class="n" x="32" y="897">17</text><text class="t" x="144" y="898">Addictiv..ms 2</text>
<rect x="19" y="928" width="246" height="9" fill="#3a3d43"/>
<path d="M9 159.500H265M9 207.500H265M9 255.500H265M9 303.500H265M9 351.500H265M9 399.500H265M9 447.500H265M9 495.500H265M9 543.500H265M9 591.500H265M9 639.500H265M9 687.500H265M9 735.500H265M9 783.500H265M9 831.500H265M9 879.500H265M9 927.500H265" stroke="#1c1d20"/>
<path d="M255.500 112V928" stroke="#2a2c30"/>

<!-- footer of panel -->
<rect x="9" y="937" width="1903" height="17" fill="#2a2c30"/>
<rect x="9" y="937" width="256" height="17" fill="#26282c"/>
<rect x="265" y="937" width="1" height="17" fill="#0c0d0e"/>
<text x="32" y="951" font-size="10.500" fill="#c0c0c0" text-anchor="middle">M</text>
<text x="82" y="951" font-size="10.500" fill="#c0c0c0" text-anchor="middle">S</text>
<path d="M126 942.500a5.500 5.500 0 1 0 8 0M130 940v7" fill="none" stroke="#3a9ee0" stroke-width="1.600"/>
<text x="192" y="951" font-size="10.500" fill="#b8b8b8" text-anchor="middle">Small</text>
<path d="M230 944h8l-4 5z" fill="#6a6c70"/><path d="M251 942h8M251 945.500h8M251 949h8" stroke="#7a7c80" stroke-width="1.500"/>
<path d="M279 941v9l-6-4.500z" fill="#8a8c90"/>
<rect x="291" y="943" width="401" height="5" rx="2.500" fill="#6f7175"/>
<path d="M1773 941v9l6-4.500z" fill="#6a6c70"/>
<path d="M1793 946h11M1811 946h73" stroke="#7a7c80" stroke-width="2"/><circle cx="1793" cy="946" r="2" fill="#7a7c80"/><rect x="1805" y="941" width="3.500" height="10" rx="1" fill="#8a8c90"/><circle cx="1881" cy="946" r="3.500" fill="#8a8c90"/>
<path d="M1901 940h6M1901 943h6M1897 948h4M1897 951h4" stroke="#85878b" stroke-width="2"/>

<!-- transport bar -->
<rect y="954" width="1919" height="51" fill="#2a2c30"/>
<path d="M0 962H153L161 1005H0z" fill="#383b41"/>
<path d="M153 962H1595L1584 1005H161z" fill="#141516"/>
<path d="M1595 962H1919V1005H1584z" fill="#383b41"/>
<path d="M1743.500 962v43M1799.500 962v43M1855.500 962v43" stroke="#2a2c30"/>
<text x="1771" y="991" font-size="11.500" fill="#d4d4d4" text-anchor="middle">Edit</text>
<text x="1827" y="991" font-size="11.500" fill="#d4d4d4" text-anchor="middle">Mix</text>
<text x="1888" y="991" font-size="11.500" fill="#d4d4d4" text-anchor="middle">Browse</text>

<circle cx="182.500" cy="977" r="6" fill="none" stroke="#555" stroke-width="1.500"/><circle cx="182.500" cy="977" r="1.500" fill="#777"/><circle cx="179" cy="976" r="1" fill="#777"/><circle cx="186" cy="976" r="1" fill="#777"/><circle cx="182.500" cy="973.500" r="1" fill="#777"/>
<path d="M170 974v6l3-3zM195 974v6l-3-3z" fill="#555"/>
<text x="182.500" y="996" font-size="10.500" fill="#8d9094" text-anchor="middle">MIDI</text>
<rect x="207" y="970" width="65" height="5" fill="#2b2d30"/><rect x="207" y="970" width="9" height="5" fill="#4ea7d6"/><rect x="207" y="977" width="65" height="5" fill="#2b2d30"/>
<text x="241" y="996" font-size="10.500" fill="#a8abae" text-anchor="middle">Performance</text>
<circle cx="300.400" cy="983" r="10" fill="none" stroke="#a8a8a8" stroke-width="2" stroke-dasharray="2 3.200"/>
<text class="w" x="325" y="981" textLength="50.500" lengthAdjust="spacingAndGlyphs">44.1 kHz</text>
<text class="w" x="325" y="997" textLength="38.500" lengthAdjust="spacingAndGlyphs">10.9 ms</text>
<text class="w" x="393" y="981" textLength="61" lengthAdjust="spacingAndGlyphs">6:15 hours</text>
<text class="s" x="393" y="997" textLength="58" lengthAdjust="spacingAndGlyphs">Record Max</text>
<text x="484" y="981" font-size="12.500" fill="#a8aaac" textLength="75" lengthAdjust="spacingAndGlyphs">00:02:37.240</text>
<text class="s" x="497" y="997" textLength="43" lengthAdjust="spacingAndGlyphs">Seconds</text><path d="M544 990h7l-3.500 5z" fill="#8d9094"/>
<text x="590" y="983" font-size="18" font-weight="bold" fill="#d0d0d0" textLength="133" lengthAdjust="spacingAndGlyphs">00155.02.04.44</text>
<text class="s" x="650" y="997">Bars</text><path d="M677 990h7l-3.500 5z" fill="#8d9094"/>
<g fill="#bdbdbd">
<path d="M754 976v12l-10-6zM773 976v12l-8-6zM783.700 976v12l-10-6zM797 976v12l8-6zM806 976v12l9-6zM823 976v12l10.500-6zM860 976v12l-10-6z"/><rect x="848" y="976" width="1.500" height="12"/>
<path d="M920 973v20l16.700-10z"/><circle cx="960.800" cy="983" r="10"/>
</g>
<rect x="880.500" y="972.500" width="21" height="21" fill="#2ab0dc" stroke="#000"/>
<path d="M1001 993h-5a9 9 0 0 1 0-19h15a9 9 0 0 1 0 19h-3M1001 993l3-9M1006 985l-2-1 5 0-1 6" fill="none" stroke="#a0a0a0" stroke-width="2"/>
<text x="1042" y="981" font-size="12" fill="#3d7fb3" text-anchor="middle">L</text><text x="1042" y="996" font-size="12" fill="#3d7fb3" text-anchor="middle">R</text>
<path d="M1051 975h3v18h-3" fill="none" stroke="#777"/>
<text x="1059.600" y="980.500" font-size="12.500" fill="#cfd0d2" textLength="90" lengthAdjust="spacingAndGlyphs">00002.01.01.00</text>
<text x="1059.600" y="995.500" font-size="12.500" fill="#cfd0d2" textLength="90" lengthAdjust="spacingAndGlyphs">00131.01.01.00</text>
<text x="1185" y="981" font-size="12" fill="#cfd0d2" text-anchor="middle">Off</text>
<text x="1185" y="997" font-size="11" fill="#8d9094" text-anchor="middle">Sync</text>
<path d="M1213 974h6l3 3h7M1213 977h4" fill="none" stroke="#9a9a9a"/>
<circle cx="1221" cy="991" r="3.500" fill="none" stroke="#8a8c90" stroke-width="2.500"/>
<path d="M1240 970v10" stroke="#9a9a9a"/><rect x="1242" y="972" width="9" height="5.500" fill="#9a9a9a"/>
<path d="M1238 991h3M1253 991h3M1243 986v10M1252 986v10" stroke="#9a9a9a"/><rect x="1243" y="988.500" width="9" height="5" fill="#9a9a9a"/>
<circle cx="1274" cy="975" r="4.500" fill="#7a7c80"/>
<path d="M1289 971l3-1 2 2v2l6 6-2 2-6-6h-2z" fill="#9a9a9a"/>
<path d="M1316 970l6 12h-12z" fill="#3fb6e6"/><path d="M1312 980l7-8" stroke="#141516"/>
<text x="1295" y="997" font-size="10.500" fill="#8d9094" text-anchor="middle">Metronome</text>
<text x="1356" y="981" font-size="12.500" fill="#cfd0d2" text-anchor="middle">3 / 4</text>
<text x="1357" y="997" font-size="10.500" fill="#8d9094" text-anchor="middle">Timing</text>
<text x="1401.500" y="981" font-size="12" fill="#cfd0d2" text-anchor="middle">-</text>
<text x="1401" y="997" font-size="10.500" fill="#8d9094" text-anchor="middle">Key</text>
<text x="1448" y="981" font-size="13" fill="#cfd0d2" text-anchor="middle" textLength="39" lengthAdjust="spacingAndGlyphs">177.00</text>
<text x="1448" y="997" font-size="10.500" fill="#8d9094" text-anchor="middle">Tempo</text>
<rect x="1485" y="970" width="66" height="5" fill="#2e3033"/><rect x="1485" y="977" width="66" height="5" fill="#2e3033"/><rect x="1553" y="970" width="22" height="12" fill="#2a2c2f"/>
<rect x="1485" y="987" width="50" height="9" fill="url(#st)"/><rect x="1535" y="987" width="2" height="9" fill="#c8d8e0"/><rect x="1537" y="987" width="15" height="9" fill="url(#sg)"/>
<rect x="1560" y="987" width="16" height="10" rx="5" fill="#45bde8"/><circle cx="1571" cy="992" r="3.500" fill="#141516"/>
</svg>
</body></html>
